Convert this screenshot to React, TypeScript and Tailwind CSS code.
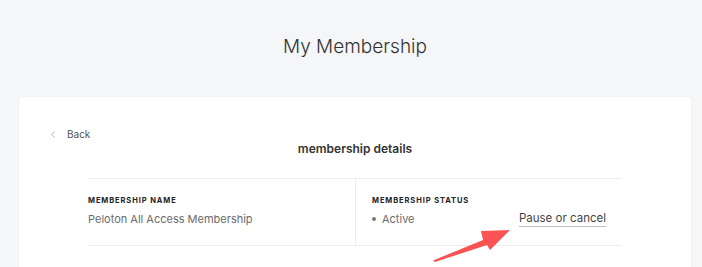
import React from 'react';

const Field = ({ label, children, className = '' }: any) => (
  <div className={`pt-[17px] pb-[18px] ${className}`}>
    <p className="text-[7.5px] leading-[10px] font-bold uppercase tracking-[0.12em] text-[#222]">{label}</p>
    <div className="mt-[5px] text-[11px] leading-[16px] text-[#6b6b6b]">{children}</div>
  </div>
);

const App = () => {
  return (
    <div className="relative h-[267px] w-full overflow-hidden bg-[#f5f6f8] font-['Inter',sans-serif]">
      <div className="pl-[8px]">
        <header className="pt-[34px] h-[97px]">
          <h1 className="text-center text-[19px] leading-[26px] font-light text-[#333]">My Membership</h1>
        </header>

        <div className="mx-[11px] h-[200px] bg-white rounded-[4px] shadow-[0_0_2px_rgba(0,0,0,0.06)]">
          <div className="pt-[31px] pl-[32px] flex items-center gap-[12px] text-[10px] leading-[12px] text-[#555]">
            <svg width="4" height="7" viewBox="0 0 4 7" fill="none">
              <path d="M3.5 0.5L0.7 3.5L3.5 6.5" stroke="#aaa" strokeWidth="0.9" />
            </svg>
            <span>Back</span>
          </div>
          <h2 className="mt-[1px] text-center text-[12px] leading-[16px] font-semibold text-[#333]">membership details</h2>

          <div className="mx-auto mt-[21px] w-[534px] border-y border-[#ececec] grid grid-cols-2">
            <Field label="Membership Name">Peloton All Access Membership</Field>
            <Field label="Membership Status" className="border-l border-[#ececec] pl-[16px] pr-[16px]">
              <div className="flex items-center justify-between">
                <span className="flex items-center gap-[6px]">
                  <span className="w-[4px] h-[4px] rounded-full bg-[#777]"></span>
                  Active
                </span>
                <span className="text-[11.5px] text-[#444] border-b-[1.5px] border-[#bdbdbd] leading-[15px]">Pause or cancel</span>
              </div>
            </Field>
          </div>
        </div>
      </div>

      {/* annotation arrow */}
      <svg className="absolute left-0 top-0 pointer-events-none" width="702" height="267" viewBox="0 0 702 267">
        <polygon
          points="433,260.5 483,240 481,231 510,230 490,250 487,245 435,262"
          fill="#fa5353"
        />
      </svg>
    </div>
  );
};

export default App;
